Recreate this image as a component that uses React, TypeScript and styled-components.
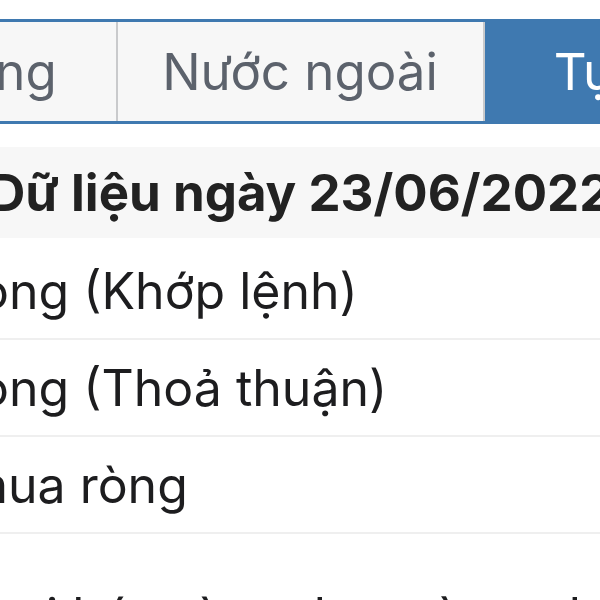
import React from "react";
import styled, { createGlobalStyle } from "styled-components";

const GlobalStyle = createGlobalStyle`
  html, body {
    margin: 0;
    padding: 0;
    background: #ffffff;
  }
  body {
    font-family: Inter, "Noto Sans", sans-serif;
    -webkit-font-smoothing: antialiased;
  }
`;

const Viewport = styled.div`
  width: 600px;
  height: 600px;
  overflow: hidden;
  display: flex;
  align-items: flex-start;
  justify-content: center;
`;

const Page = styled.div`
  flex: none;
  width: 1105px;
  display: flex;
  flex-direction: column;

  & > * {
    flex-shrink: 0;
  }
`;

const TabBar = styled.div`
  margin-top: 19px;
  display: flex;
  border: 3px solid #3f79b0;
  background: #f7f7f7;
`;

const Tab = styled.div<{ $active?: boolean }>`
  width: 365px;
  height: 99px;
  display: flex;
  align-items: center;
  justify-content: center;
  font-size: 51px;
  color: ${(p) => (p.$active ? "#ffffff" : "#5c626c")};
  background: ${(p) => (p.$active ? "#3f79b0" : "transparent")};
  white-space: nowrap;

  & + & {
    border-left: 2px solid #c9cacc;
  }
`;

const SectionTitle = styled.div`
  margin-top: 23px;
  height: 91px;
  display: flex;
  align-items: center;
  padding-left: 241px;
  background: #f7f7f7;
  font-size: 51px;
  font-weight: 700;
  color: #222222;
  white-space: nowrap;
`;

const List = styled.div<{ $gap?: number }>`
  display: flex;
  flex-direction: column;
  margin-top: ${(p) => p.$gap ?? 0}px;
`;

const Row = styled.div<{ $first?: boolean }>`
  height: ${(p) => (p.$first ? 100 : 95)}px;
  display: flex;
  align-items: flex-end;
  border-bottom: 2px solid #efefef;
  font-size: 50px;
  color: #1d1d1f;
  white-space: nowrap;
`;

const Label = styled.span`
  display: block;
  margin-left: -170px;
  line-height: 1;
  padding-bottom: 22px;
`;

const rows = [
  "Giá trị giao dịch ròng (Khớp lệnh)",
  "Giá trị giao dịch ròng (Thoả thuận)",
  "Top 10 cổ phiếu mua ròng",
];

export default function App() {
  return (
    <>
      <GlobalStyle />
      <Viewport>
        <Page>
          <TabBar>
            <Tab>Thị trường</Tab>
            <Tab>Nước ngoài</Tab>
            <Tab $active>Tự doanh</Tab>
          </TabBar>
          <SectionTitle>Dữ liệu ngày 23/06/2022</SectionTitle>
          <List>
            {rows.map((label, i) => (
              <Row key={label} $first={i === 0}>
                <Label>{label}</Label>
              </Row>
            ))}
          </List>
          <List $gap={34}>
            <Row>
              <Label>Tổng hợp khối ngoại bán ròng theo từng phiên hôm nay</Label>
            </Row>
          </List>
        </Page>
      </Viewport>
    </>
  );
}
